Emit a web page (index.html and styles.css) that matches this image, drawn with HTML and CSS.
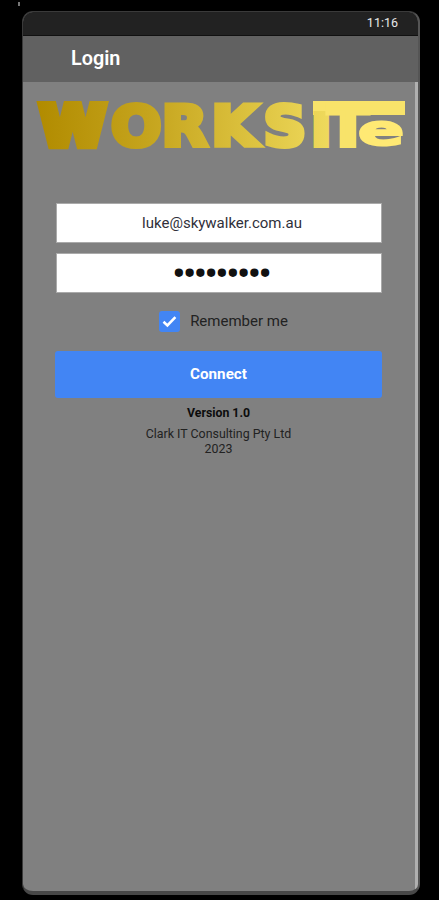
FILE: index.html
```html
<!DOCTYPE html>
<html lang="en">
<head>
    <meta charset="UTF-8">
    <meta name="viewport" content="width=device-width, initial-scale=1.0">
    <title>Login</title>
    <link rel="stylesheet" href="styles.css">
</head>
<body>
    <div class="speck"></div>
    <div class="phone">
        <div class="status-bar">11:16</div>
        <header class="app-bar">
            <h1>Login</h1>
        </header>
        <main class="content">
            <svg class="logo" width="376" height="54" viewBox="0 0 376 54">
                <defs>
                    <linearGradient id="gold" gradientUnits="userSpaceOnUse" x1="4" y1="0" x2="350" y2="0">
                        <stop offset="0" stop-color="#b18b00"/>
                        <stop offset="0.3" stop-color="#c5a41d"/>
                        <stop offset="0.6" stop-color="#dec441"/>
                        <stop offset="0.8" stop-color="#efda5d"/>
                        <stop offset="1" stop-color="#ffe974"/>
                    </linearGradient>
                </defs>
                <rect class="logo-bar" x="280" y="4" width="92" height="14"/>
                <text class="logo-text" transform="scale(1.06 1)" y="47.5" x="6.5 73.5 121.5 168.5 217.5 265.5 278"><tspan class="logo-w">W</tspan>ORKS<tspan class="logo-i">i</tspan><tspan class="logo-t">T</tspan></text>
                <text class="logo-text logo-e" transform="scale(1.6 1)" y="48" x="203">e</text>
            </svg>
            <form class="login-form">
                <input class="field" type="text" value="luke@skywalker.com.au">
                <input class="field password" type="password" value="skywalker">
                <label class="remember">
                    <span class="checkbox">
                        <svg width="21" height="21" viewBox="0 0 21 21">
                            <path d="M4.5 10.8 L8.4 14.4 L16.4 6.2" fill="none" stroke="#fff" stroke-width="2.6"/>
                        </svg>
                    </span>
                    <span>Remember me</span>
                </label>
                <button class="connect" type="button">Connect</button>
            </form>
            <div class="version">Version 1.0</div>
            <div class="company">Clark IT Consulting Pty Ltd<br>2023</div>
        </main>
    </div>
</body>
</html>
```
FILE: styles.css
```css
body {
    margin: 0;
    height: 900px;
    background-color: #000;
    font-family: Roboto, "Liberation Sans", sans-serif;
    overflow: hidden;
}
.speck {
    position: absolute;
    left: 18px;
    top: 2px;
    width: 2px;
    height: 4px;
    background-color: #777;
}
.phone {
    box-sizing: border-box;
    width: 398px;
    height: 884px;
    margin: 11px 0 0 22px;
    border: 1px solid #3a3a3a;
    border-right: 2px solid #555;
    border-bottom: 4px solid #484848;
    border-radius: 11px;
    background-color: #808080;
    display: flex;
    flex-direction: column;
    overflow: hidden;
}
.status-bar {
    box-sizing: border-box;
    height: 24px;
    padding-right: 20px;
    border-bottom: 1px solid #111;
    background-color: #222;
    color: #e8e8e8;
    font-size: 12.5px;
    line-height: 22px;
    text-align: right;
}
.app-bar {
    height: 46px;
    padding-left: 48px;
    background-color: #616161;
    display: flex;
    align-items: center;
}
.app-bar h1 {
    margin: 0;
    color: #fff;
    font-size: 19.8px;
    font-weight: 600;
    line-height: 46px;
}
.content {
    flex: 1;
    border-right: 3px solid #b0b0b0;
    display: flex;
    flex-direction: column;
    align-items: center;
}
.logo {
    margin: 15px 0 0 3px;
    align-self: flex-start;
    padding-left: 7px;
    overflow: visible;
}
.logo-bar {
    fill: #f8e36a;
}
.logo-text {
    fill: url(#gold);
    stroke: url(#gold);
    stroke-width: 5px;
    stroke-linejoin: miter;
    font-family: "DejaVu Sans", sans-serif;
    font-size: 56px;
    font-weight: bold;
}
.logo-w {
    stroke-width: 8px;
}
.logo-i {
    font-size: 37px;
    stroke-width: 8px;
}
.logo-t {
    fill: #f8e36a;
    stroke: #f8e36a;
}
.logo-e {
    fill: #ffe974;
    stroke: #ffe974;
    stroke-width: 2px;
    font-size: 43px;
}
.login-form {
    width: 327px;
    margin: 52px 0 0 -1px;
    display: flex;
    flex-direction: column;
    align-items: center;
}
.field {
    box-sizing: border-box;
    width: 326px;
    height: 40px;
    margin: 0 0 10px 1px;
    padding: 0 0 0 6px;
    border: 1px solid #aaa;
    background-color: #fff;
    color: #30303a;
    font-family: inherit;
    font-size: 15px;
    text-align: center;
}
.password {
    margin-bottom: 18px;
    color: #111;
    font-size: 32px;
    -webkit-text-stroke: 1.8px #111;
}
.remember {
    display: flex;
    align-items: center;
    gap: 10px;
    margin-left: 10px;
    color: #222;
    font-size: 15px;
    line-height: 21px;
}
.checkbox {
    width: 21px;
    height: 21px;
    border-radius: 3px;
    background-color: #4285f4;
}
.checkbox svg {
    display: block;
}
.connect {
    width: 327px;
    height: 47px;
    margin-top: 19px;
    padding: 0 6px 1px;
    border: none;
    border-radius: 3px;
    background-color: #4285f4;
    color: #fff;
    font-family: inherit;
    font-size: 15.2px;
    font-weight: bold;
}
.version {
    margin: 8px 1px 0 0;
    color: #0c0c0c;
    font-size: 12.3px;
    font-weight: bold;
    line-height: 15px;
}
.company {
    margin: 5px 1px 0 0;
    color: #222;
    font-size: 12.4px;
    line-height: 15px;
    text-align: center;
}
```
